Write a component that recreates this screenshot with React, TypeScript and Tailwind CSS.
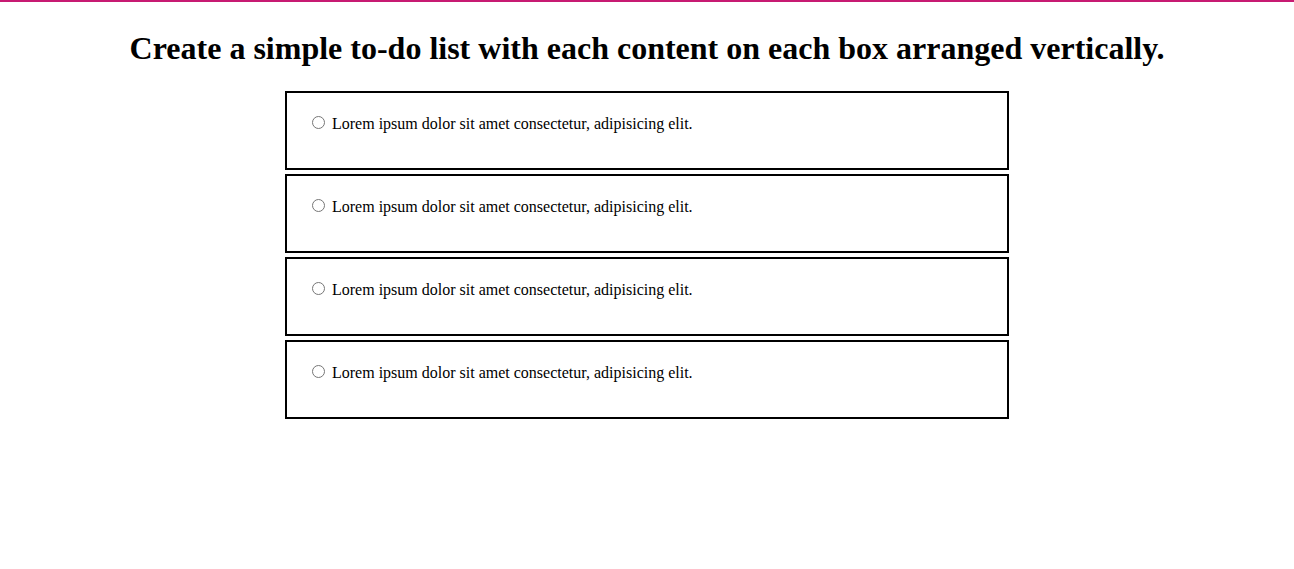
import React from 'react';

const items = [
  'Lorem ipsum dolor sit amet consectetur, adipisicing elit.',
  'Lorem ipsum dolor sit amet consectetur, adipisicing elit.',
  'Lorem ipsum dolor sit amet consectetur, adipisicing elit.',
  'Lorem ipsum dolor sit amet consectetur, adipisicing elit.',
];

export default function App() {
  return (
    <div className="min-h-screen bg-white border-t-2 border-[#c71a72] font-['Liberation_Serif',serif] text-black">
      <h1 className="mt-[28px] mb-[24px] text-center text-[32px] leading-[37px] font-bold">
        Create a simple to-do list with each content on each box arranged vertically.
      </h1>

      <ul className="mx-auto flex w-[724px] flex-col gap-1">
        {items.map((text, i) => (
          <li key={i} className="box-border h-[79px] border-2 border-black p-5 text-base leading-[18.4px]">
            <input type="radio" name={`todo-${i}`} className="mt-[3px] mr-[3px] ml-[5px]" />{' '}
            {text}
          </li>
        ))}
      </ul>
    </div>
  );
}
